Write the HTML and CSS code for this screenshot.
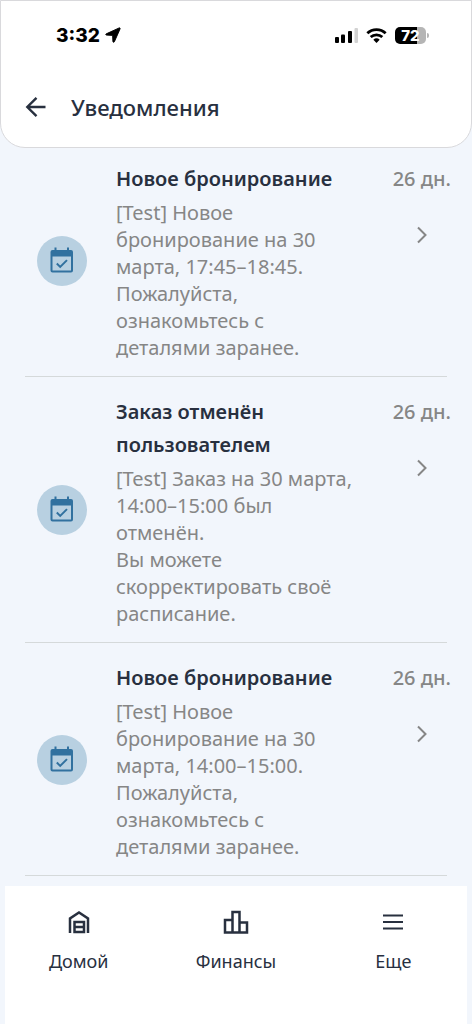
FILE: index.html
```html
<!DOCTYPE html>
<html lang="ru">
<head>
<meta charset="utf-8">
<meta name="viewport" content="width=device-width, initial-scale=1">
<title>Уведомления</title>
<link rel="stylesheet" href="styles.css">
</head>
<body>
<svg class="sprite" aria-hidden="true">
  <symbol id="calendar" viewBox="0 0 28 28">
    <path fill="currentColor" fill-rule="evenodd" d="M6.500.500h2v2.500h10.500V.500h2v2.500h2a2 2 0 0 1 2 2v18.500a2 2 0 0 1-2 2h-18.500a2 2 0 0 1-2-2V5a2 2 0 0 1 2-2h2zM4.500 9.500v14h18.500v-14z"/>
    <path fill="none" stroke="currentColor" stroke-width="2" d="M8.800 16.500l3.400 3.400 6.800-6.800"/>
  </symbol>
  <symbol id="chevron" viewBox="0 0 24 24">
    <path fill="none" stroke="currentColor" stroke-width="2" d="M8 4.500l7.500 7.500L8 19.500"/>
  </symbol>
</svg>
<header class="header">
  <div class="status">
    <div class="status-left">
      <span class="time">3:32</span>
      <svg class="location" viewBox="0 0 17 17" aria-hidden="true"><path stroke="#000" stroke-linejoin="round" d="M15 1 1.300 7.300C.5 7.700.7 8.500 1.600 8.600l6.500.3.300 6.500c.1 1 1.200 1.100 1.600.2L16 2c.3-.7-.3-1.300-1-1z"/></svg>
    </div>
    <div class="status-right">
      <svg class="signal" viewBox="0 0 23 15" aria-hidden="true"><rect y="9" width="4" height="6" rx="1"/><rect x="6" y="6.500" width="4" height="8.500" rx="1"/><rect x="13" y="3" width="4" height="12" rx="1"/><rect x="19.500" width="3.500" height="15" rx="1" fill="#d2d2d2"/></svg>
      <svg class="wifi" viewBox="0 0 22 16" aria-hidden="true"><g fill="none" stroke="#000" stroke-width="2.900"><path d="M1.200 5.700a14 14 0 0 1 19.600 0"/><path d="M4.800 9.700a9 9 0 0 1 12.400 0"/></g><path d="M7.600 12.600a5 5 0 0 1 6.800 0L11 16z"/></svg>
      <span class="battery"><span class="battery-body">72</span><span class="battery-tip"></span></span>
    </div>
  </div>
  <div class="title-bar">
    <button class="back" type="button" aria-label="Назад">
      <svg viewBox="0 0 22 22" aria-hidden="true"><path d="M20.500 11H2.500M11.500 1.800l-9.200 9.200 9.200 9.200"/></svg>
    </button>
    <h1>Уведомления</h1>
  </div>
</header>
<main class="list">
  <article class="item">
    <span class="badge"><svg aria-hidden="true"><use href="#calendar"/></svg></span>
    <div class="text">
      <h2>Новое бронирование</h2>
      <p>[Test] Новое бронирование на 30 марта, 17:45–18:45.<br>Пожалуйста, ознакомьтесь с деталями заранее.</p>
    </div>
    <div class="side">
      <time>26 дн.</time>
      <button type="button" aria-label="Открыть"><svg aria-hidden="true"><use href="#chevron"/></svg></button>
    </div>
  </article>
  <article class="item">
    <span class="badge"><svg aria-hidden="true"><use href="#calendar"/></svg></span>
    <div class="text">
      <h2>Заказ отменён пользователем</h2>
      <p>[Test] Заказ на 30 марта, 14:00–15:00 был отменён.<br>Вы можете скорректировать своё расписание.</p>
    </div>
    <div class="side">
      <time>26 дн.</time>
      <button type="button" aria-label="Открыть"><svg aria-hidden="true"><use href="#chevron"/></svg></button>
    </div>
  </article>
  <article class="item">
    <span class="badge"><svg aria-hidden="true"><use href="#calendar"/></svg></span>
    <div class="text">
      <h2>Новое бронирование</h2>
      <p>[Test] Новое бронирование на 30 марта, 14:00–15:00.<br>Пожалуйста, ознакомьтесь с деталями заранее.</p>
    </div>
    <div class="side">
      <time>26 дн.</time>
      <button type="button" aria-label="Открыть"><svg aria-hidden="true"><use href="#chevron"/></svg></button>
    </div>
  </article>
</main>
<nav class="nav">
  <a href="#home">
    <svg viewBox="0 0 28 28" aria-hidden="true"><path d="M5 25V10.500l9-6 9 6V25M9.500 24V14h9.500v10zM9.500 19h9.500"/></svg>
    Домой
  </a>
  <a href="#finance">
    <svg viewBox="0 0 28 28" aria-hidden="true"><path d="M3 12h7.500v12.500H3zM10.500 4h7v20.500h-7zM17.500 14.500h7.500v10h-7.500z"/></svg>
    Финансы
  </a>
  <a href="#more">
    <svg viewBox="0 0 28 28" aria-hidden="true"><path class="thin" d="M4 7.500h20M4 14h20M4 20.500h20"/></svg>
    Еще
  </a>
</nav>
</body>
</html>
```
FILE: styles.css
```css
* { box-sizing: border-box; }

body {
  margin: 0;
  min-height: 100vh;
  display: flex;
  flex-direction: column;
  background: #f2f6fc;
  color: #28303f;
  font-family: "Noto Sans", sans-serif;
}

h1, h2, p { margin: 0; }

button {
  display: flex;
  padding: 0;
  border: 0;
  background: none;
  color: inherit;
  cursor: pointer;
}

.sprite { display: none; }

.header {
  position: relative;
  padding: 20px 24px 24px;
  border: 1px solid #d9d9dc;
  border-radius: 0 0 25px 25px;
  background: #fff;
}

.status {
  display: flex;
  justify-content: space-between;
  align-items: center;
  height: 28px;
  padding: 0 18px 0 31px;
  color: #000;
  font-family: Inter, sans-serif;
}

.status-left, .status-right, .battery { display: flex; align-items: center; }
.status-left { gap: 5px; }
.status-right { gap: 8px; }
.time { font-size: 19px; font-weight: 800; }
.location { width: 16px; height: 16px; }
.signal { width: 23px; height: 15px; }
.wifi { width: 21px; height: 15px; }

.battery { gap: 1px; }
.battery-body {
  width: 31px;
  border-radius: 5px;
  background: linear-gradient(90deg, #000 72%, #b5b5b5 72%);
  color: #fff;
  font-size: 15px;
  font-weight: 800;
  line-height: 17px;
  text-align: center;
}
.battery-tip { width: 2px; height: 5px; border-radius: 0 2px 2px 0; background: #b5b5b5; }

.title-bar {
  display: flex;
  align-items: center;
  gap: 24px;
  margin-top: 42px;
}
.back svg { width: 22px; height: 22px; fill: none; stroke: #28303f; stroke-width: 2.4; }
h1 { font-size: 22px; font-weight: 500; line-height: 32px; }

.list { flex: 1; margin-top: -4px; }

.item {
  display: flex;
  position: relative;
  padding: 0 21px 0 37px;
}
.item::after {
  content: "";
  position: absolute;
  right: 25px;
  bottom: 0;
  left: 25px;
  height: 1px;
  background: #d5d9da;
}

.badge {
  display: flex;
  flex: none;
  align-items: center;
  justify-content: center;
  align-self: center;
  width: 50px;
  height: 50px;
  border-radius: 50%;
  background: #b8d0e1;
  color: #31719f;
}
.badge svg { width: 28px; height: 28px; }

.text { flex: 1; margin: 0 36px 0 29px; padding: 18px 0 16px; }
h2 { font-size: 20px; font-weight: 600; line-height: 33px; }
.text p { margin-top: 4px; color: #868686; font-size: 20px; line-height: 27px; }

.side {
  display: flex;
  flex-direction: column;
  align-items: center;
  gap: 28px;
  padding-top: 18px;
  color: #868686;
}
time { font-size: 20px; font-weight: 500; line-height: 33px; white-space: nowrap; }
.side svg { width: 24px; height: 24px; }

.nav {
  position: sticky;
  bottom: 0;
  display: grid;
  grid-template-columns: repeat(3, 1fr);
  height: 138px;
  padding-top: 22px;
  background: #fff;
  box-shadow: inset 5px 0 #f2f6fc, inset -5px 0 #f2f6fc;
}
.nav a {
  display: flex;
  flex-direction: column;
  align-items: center;
  gap: 12px;
  color: #28303f;
  font-size: 18px;
  line-height: 26px;
  text-decoration: none;
}
.nav svg { width: 28px; height: 28px; fill: none; stroke: currentColor; stroke-width: 2.5; }
.nav .thin { stroke-width: 2; }
```
